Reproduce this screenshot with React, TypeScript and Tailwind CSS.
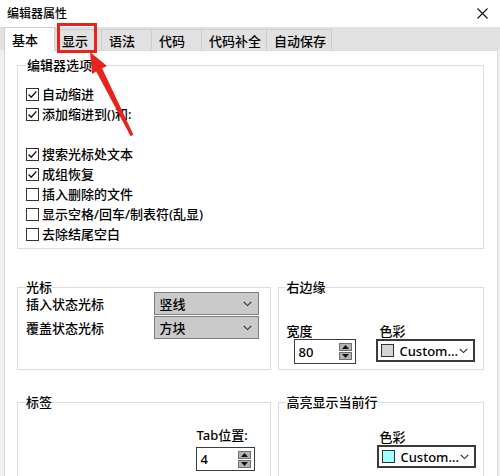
import React from 'react';

// Windows-style "编辑器属性" dialog, 基本 tab

function Chevron() {
  return (
    <svg width="9" height="6" viewBox="0 0 9 6" className="shrink-0">
      <polyline points="0.8,1 4.5,4.6 8.2,1" fill="none" stroke="#333" strokeWidth="1.1" />
    </svg>
  );
}

function CheckRow({ label, checked }: { label?: string; checked?: boolean }) {
  return (
    <div className="flex h-[20px] items-center gap-[3px]">
      {label && (
        <>
          <span className="flex h-[13px] w-[13px] shrink-0 items-center justify-center border border-[#333] bg-white">
            {checked && (
              <svg width="11" height="11" viewBox="0 0 11 11">
                <polyline points="1.6,5.6 4.2,8.2 9.4,2.4" fill="none" stroke="#111" strokeWidth="1.4" />
              </svg>
            )}
          </span>
          <span className="leading-[16px]">{label}</span>
        </>
      )}
    </div>
  );
}

function Select({ value }: { value: string }) {
  return (
    <div className="flex h-[23px] w-[105px] items-center justify-between border border-[#7c7c7c] bg-[#cacaca] pl-[4px] pr-[6px]">
      <span className="leading-[16px]">{value}</span>
      <Chevron />
    </div>
  );
}

function Spin({ value, className }: { value: string; className: string }) {
  return (
    <div className={`flex items-center justify-between border border-[#3c3c3c] bg-white pl-[3px] pr-[3px] ${className}`}>
      <span className="leading-[16px]">{value}</span>
      <div className="flex flex-col gap-px">
        <span className="flex h-[8px] w-[13px] items-center justify-center border border-[#6f6f6f] bg-[#b4b4b4]">
          <svg width="7" height="4" viewBox="0 0 7 4">
            <polygon points="0,4 3.5,0 7,4" fill="#111" />
          </svg>
        </span>
        <span className="flex h-[8px] w-[13px] items-center justify-center border border-[#6f6f6f] bg-[#b4b4b4]">
          <svg width="7" height="4" viewBox="0 0 7 4">
            <polygon points="0,0 3.5,4 7,0" fill="#111" />
          </svg>
        </span>
      </div>
    </div>
  );
}

function ColorCombo({ swatch }: { swatch: string }) {
  return (
    <div className="flex h-[23px] w-[99px] items-center border-2 border-[#3a3a3a] bg-white pl-[3px] pr-[5px]">
      <span className={`h-[13px] w-[13px] shrink-0 border border-[#333] ${swatch}`} />
      <span className="ml-[5px] flex-1 leading-[16px]">Custom...</span>
      <Chevron />
    </div>
  );
}

const tabs = [
  { label: '显示', w: 'w-[47px]' },
  { label: '语法', w: 'w-[50px]' },
  { label: '代码', w: 'w-[50px]' },
  { label: '代码补全', w: 'w-[65px]' },
  { label: '自动保存', w: 'w-[65px]' },
];

export default function App() {
  return (
    <div className="relative h-[476px] w-[500px] overflow-hidden bg-[#f0f0f0] font-['Noto_Sans','Noto_Sans_CJK_SC',sans-serif] text-[13px] font-medium text-black">
      {/* Title bar */}
      <div className="flex h-[27px] items-center justify-between bg-white pl-[7px] pr-[12px]">
        <span className="text-[12px] leading-[14px]">编辑器属性</span>
        <svg width="11" height="11" viewBox="0 0 11 11">
          <path d="M0.5 0.5 L10.5 10.5 M10.5 0.5 L0.5 10.5" stroke="#111" strokeWidth="1.1" />
        </svg>
      </div>

      {/* Tabs */}
      <div className="flex h-[23px] items-end bg-[#e1e1e1] pl-[4px]">
        <div className="relative z-10 -mb-px flex h-[24px] w-[51px] items-center border border-b-0 border-[#cdcdcd] bg-white pl-[7px] leading-[16px]">
          基本
        </div>
        {tabs.map((t) => (
          <div
            key={t.label}
            className={`flex h-[21px] items-center border-t border-r border-[#cdcdcd] pl-[7px] pt-px leading-[16px] ${t.w}`}
          >
            {t.label}
          </div>
        ))}
      </div>

      {/* Panel */}
      <div className="ml-[4px] mr-[2px] h-[500px] border border-[#d9d9d9] bg-white pl-[12px] pr-[13px] pt-[8px]">
        <fieldset className="border border-[#dcdcdc] pl-[8px] pt-[13px] pb-[4px]">
          <legend className="px-px leading-[12px]">编辑器选项</legend>
          <CheckRow label="自动缩进" checked />
          <CheckRow label="添加缩进到()和:" checked />
          <CheckRow />
          <CheckRow label="搜索光标处文本" checked />
          <CheckRow label="成组恢复" checked />
          <CheckRow label="插入删除的文件" />
          <CheckRow label="显示空格/回车/制表符(乱显)" />
          <CheckRow label="去除结尾空白" />
        </fieldset>

        <div className="mt-[32px] flex gap-[7px]">
          <fieldset className="w-[255px] border border-[#dcdcdc] pl-[8px] pr-[11px] pb-[30px]">
            <legend className="leading-[12px]">光标</legend>
            <div className="-mt-px flex flex-col gap-px">
              <div className="flex items-center justify-between">
                <span className="leading-[16px]">插入状态光标</span>
                <Select value="竖线" />
              </div>
              <div className="flex items-center justify-between">
                <span className="leading-[16px]">覆盖状态光标</span>
                <Select value="方块" />
              </div>
            </div>
          </fieldset>

          <fieldset className="w-[206px] border border-[#dcdcdc] pl-[7px] pb-[5px]">
            <legend className="leading-[12px]">右边缘</legend>
            <div className="flex pt-[30px]">
              <div className="w-[90px]">
                <div className="leading-[16px]">宽度</div>
                <Spin value="80" className="ml-[8px] h-[25px] w-[62px]" />
              </div>
              <div>
                <div className="pl-[3px] leading-[16px]">色彩</div>
                <ColorCombo swatch="bg-[#d4d4d4]" />
              </div>
            </div>
          </fieldset>
        </div>

        <div className="mt-[26px] flex gap-[7px]">
          <fieldset className="w-[255px] border border-[#dcdcdc] pr-[15px] pb-[10px]">
            <legend className="ml-[8px] leading-[12px]">标签</legend>
            <div className="flex justify-end pt-[19px]">
              <div className="w-[59px]">
                <div className="leading-[16px]">Tab位置:</div>
                <Spin value="4" className="mt-[4px] h-[24px] w-[59px]" />
              </div>
            </div>
          </fieldset>

          <fieldset className="w-[206px] border border-[#dcdcdc] pl-[7px] pb-[10px]">
            <legend className="leading-[12px]">高亮显示当前行</legend>
            <div className="ml-[91px] pt-[21px]">
              <div className="pl-[2px] leading-[16px]">色彩</div>
              <ColorCombo swatch="bg-[#a0ffff]" />
            </div>
          </fieldset>
        </div>
      </div>

      {/* Annotation: red box + arrow */}
      <div className="pointer-events-none absolute left-[57px] top-[23px] h-[30px] w-[40px] border-[3px] border-[#e8231d]" />
      <svg className="pointer-events-none absolute left-0 top-0" width="500" height="476" viewBox="0 0 500 476">
        <polygon points="90,52 107,66 99.5,69.5 92,74" fill="#e8231d" />
        <polygon points="96,71 102,68 133.5,135 130.5,136" fill="#e8231d" />
      </svg>
    </div>
  );
}
